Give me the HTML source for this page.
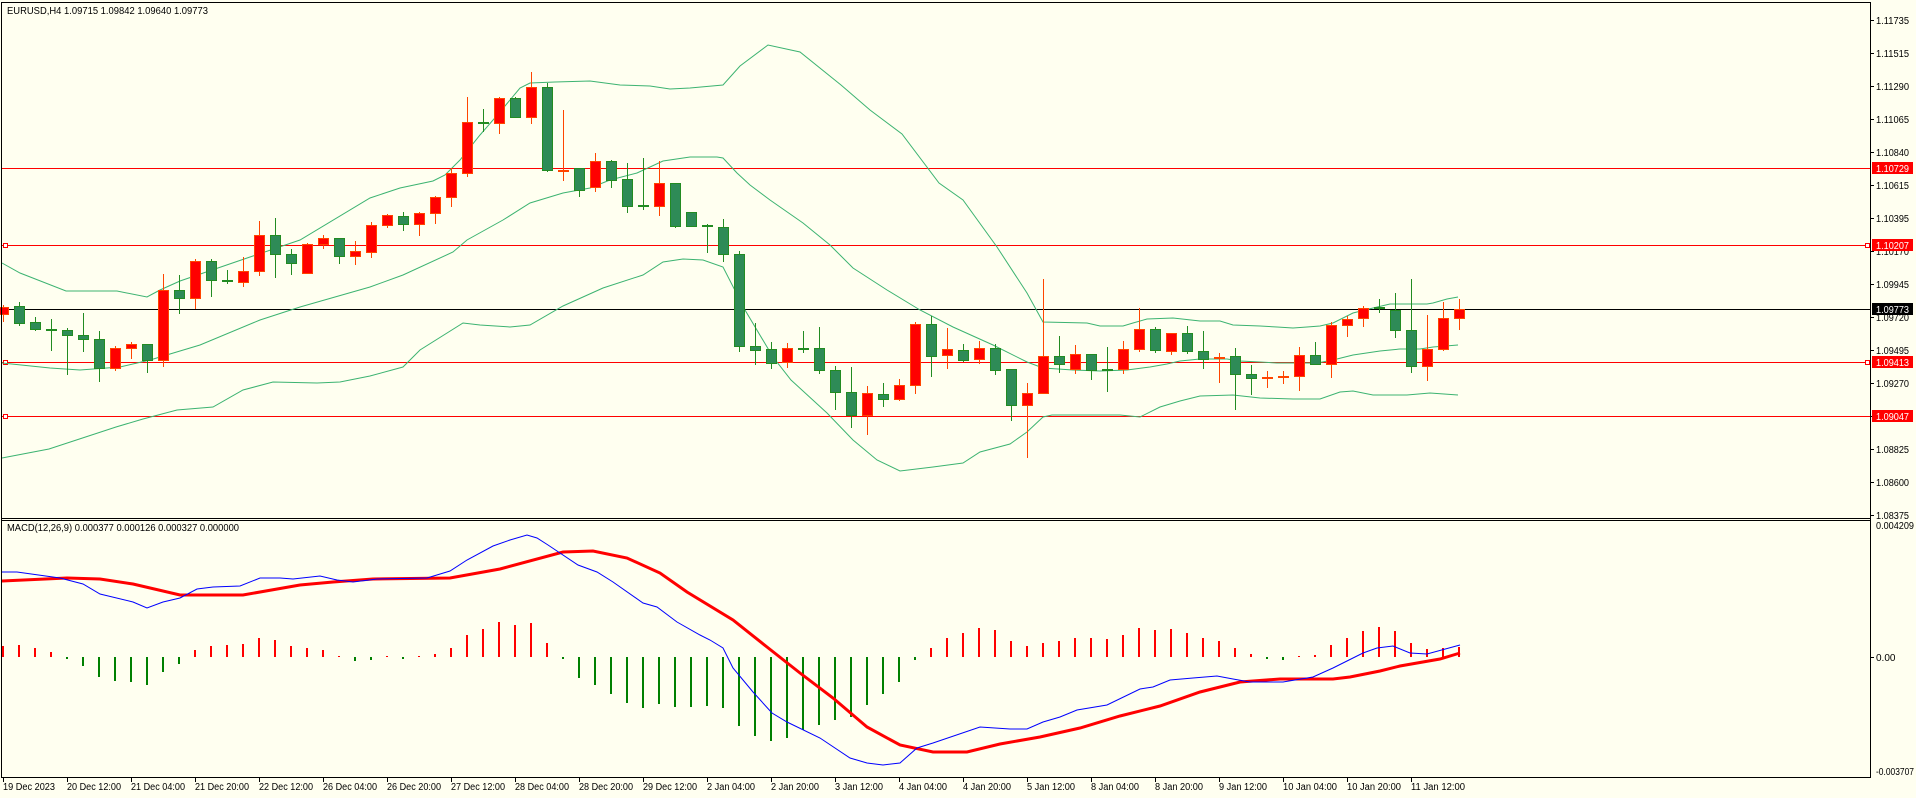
<!DOCTYPE html>
<html><head><meta charset="utf-8"><style>
html,body{margin:0;padding:0;background:#fffff0;width:1916px;height:798px;overflow:hidden}
svg{display:block}
text{font-family:"Liberation Sans",sans-serif;font-size:10px;fill:#000}
</style></head><body>
<svg id="s" width="1916" height="798" viewBox="0 0 1916 798" xmlns="http://www.w3.org/2000/svg">
<rect width="1916" height="798" fill="#fffff0"/>
<g id="lv" shape-rendering="crispEdges">
<line x1="2" y1="168.5" x2="1870" y2="168.5" stroke="#ff0000"/>
<line x1="2" y1="245.5" x2="1870" y2="245.5" stroke="#ff0000"/>
<line x1="2" y1="309.5" x2="1870" y2="309.5" stroke="#000"/>
<line x1="2" y1="362.5" x2="1870" y2="362.5" stroke="#ff0000"/>
<line x1="2" y1="416.5" x2="1870" y2="416.5" stroke="#ff0000"/>
<rect x="3.5" y="243.5" width="4" height="4" fill="#fff" stroke="#ff0000"/>
<rect x="3.5" y="360.5" width="4" height="4" fill="#fff" stroke="#ff0000"/>
<rect x="3.5" y="414.5" width="4" height="4" fill="#fff" stroke="#ff0000"/>
<rect x="1865.5" y="243.5" width="4" height="4" fill="#fff" stroke="#ff0000"/>
<rect x="1865.5" y="360.5" width="4" height="4" fill="#fff" stroke="#ff0000"/>
</g>
<g fill="none" stroke="#3cb371" stroke-width="1">
<polyline points="2,263 20,273 66,291 117,291 147,297 160,290 180,281 250,257 300,240 370,198 400,188 433,181 445,175 460,160 480,135 500,112 520,88 530,83 555,82 590,81 620,85 650,86 670,89 690,88 723,85 740,66 768,45 800,52 841,85 870,110 902,134 939,183 963,200 997,247 1027,293 1043,322 1087,323 1100,326 1123,326 1133,323 1147,319 1173,318 1200,321 1220,321 1233,325 1260,326 1277,327 1293,328 1307,327 1320,326 1333,323 1353,313 1373,308 1390,304 1427,304 1433,303 1447,299 1458,297"/>
<polyline points="2,363 50,368 80,370 120,367 150,360 200,345 260,320 300,307 370,287 403,275 453,252 467,240 503,220 530,203 563,193 590,188 610,180 637,173 663,161 690,157 717,157 723,158 737,173 750,185 770,200 803,223 830,245 853,268 887,290 920,310 953,327 993,345 1027,362 1043,368 1073,370 1100,371 1127,370 1150,367 1167,364 1180,361 1200,359 1227,359 1240,361 1260,362 1277,363 1317,363 1333,360 1353,355 1380,351 1400,349 1420,349 1433,347 1458,345"/>
<polyline points="2,458 49,449 116,427 143,419 177,410 213,407 243,390 273,382 317,383 340,382 370,376 403,367 420,350 463,323 480,325 510,327 530,325 563,306 603,288 643,275 663,262 683,259 703,260 723,267 745,310 773,357 791,380 827,413 853,440 877,460 900,471 933,467 963,463 980,452 1010,444 1027,432 1043,417 1052,415 1120,415 1140,417 1160,407 1180,401 1200,396 1233,395 1260,398 1293,399 1320,399 1340,392 1353,391 1373,395 1407,395 1430,393 1458,395"/>
</g>
<g id="cd" shape-rendering="crispEdges"></g>
<g id="hist" shape-rendering="crispEdges"></g>
<polyline fill="none" stroke="#ff0000" stroke-width="3" points="2,581 67,578 100,579 133,584 180,595 243,595 300,585 333,582 373,579 450,578 500,569 563,552 593,551 627,558 660,573 687,592 733,620 767,647 800,673 833,698 867,727 900,745 933,752 967,752 1000,744 1040,737 1080,728 1120,716 1160,706 1200,692 1240,682 1280,679 1333,679 1350,677 1380,671 1400,666 1440,659 1460,653"/>
<polyline fill="none" stroke="#0000ff" stroke-width="1" points="2,572 17,572 60,578 83,584 100,594 133,602 147,608 163,602 180,598 197,589 213,587 240,586 260,578 280,578 293,579 320,576 337,580 353,582 377,579 427,578 450,571 467,560 493,546 510,540 527,535 537,538 548,545 578,565 597,572 613,582 643,603 657,607 677,622 700,635 710,640 723,648 733,668 753,692 772,713 787,722 820,738 850,758 867,763 883,765 900,763 917,748 933,743 980,727 1010,729 1027,729 1043,722 1060,717 1077,710 1107,705 1140,689 1153,687 1170,680 1193,678 1217,676 1233,679 1250,682 1283,682 1313,677 1333,668 1363,653 1377,648 1393,646 1410,653 1427,654 1460,645"/>
<g shape-rendering="crispEdges" stroke="#000" fill="none">
<line x1="1.5" y1="2" x2="1.5" y2="777"/>
<line x1="1" y1="2.5" x2="1870" y2="2.5"/>
<line x1="1870.5" y1="2" x2="1870.5" y2="777"/>
<line x1="1" y1="518.5" x2="1871" y2="518.5"/>
<line x1="1" y1="520.5" x2="1871" y2="520.5"/>
<line x1="1" y1="777.5" x2="1871" y2="777.5"/>
</g>
<g id="ticks" shape-rendering="crispEdges" stroke="#000"></g>
<text x="7" y="14" textLength="201" lengthAdjust="spacingAndGlyphs">EURUSD,H4  1.09715 1.09842 1.09640 1.09773</text>
<text x="7" y="531" textLength="232" lengthAdjust="spacingAndGlyphs">MACD(12,26,9) 0.000377 0.000126 0.000327 0.000000</text>
<g id="pl"></g>
<g>
<rect x="1872" y="162" width="41" height="12" fill="#ff0000"/><text x="1876" y="172" style="fill:#fff" textLength="33" lengthAdjust="spacingAndGlyphs">1.10729</text>
<rect x="1872" y="239" width="41" height="12" fill="#ff0000"/><text x="1876" y="249" style="fill:#fff" textLength="33" lengthAdjust="spacingAndGlyphs">1.10207</text>
<rect x="1872" y="303" width="41" height="12" fill="#000"/><text x="1876" y="313" style="fill:#fff" textLength="33" lengthAdjust="spacingAndGlyphs">1.09773</text>
<rect x="1872" y="356" width="41" height="12" fill="#ff0000"/><text x="1876" y="366" style="fill:#fff" textLength="33" lengthAdjust="spacingAndGlyphs">1.09413</text>
<rect x="1872" y="410" width="41" height="12" fill="#ff0000"/><text x="1876" y="420" style="fill:#fff" textLength="33" lengthAdjust="spacingAndGlyphs">1.09047</text>
</g>
<text x="1876" y="529" textLength="38" lengthAdjust="spacingAndGlyphs">0.004209</text>
<text x="1876" y="661">0.00</text>
<text x="1876" y="775" textLength="38" lengthAdjust="spacingAndGlyphs">-0.003707</text>
<g id="tl"></g>
</svg>
<script>
var NS="http://www.w3.org/2000/svg";
function el(p,t,a,txt){var e=document.createElementNS(NS,t);for(var k in a)e.setAttribute(k,a[k]);if(txt)e.textContent=txt;document.getElementById(p).appendChild(e);return e;}
var C=[["r",305,306.7,314,322],["g",302,306,322.7,325.7],["g",317,322.3,329.3,330.7],["g",319,329,330.7,350.7],["g",328,330.3,335.3,374.7],["g",313.3,335.3,339.3,351.7],["g",331,339.3,368.3,381.7],["r",346,348.3,368.3,370.7],["r",342.3,344.3,348.3,358.7],["g",344.3,344.3,360.3,372.7],["r",274,290.3,360.3,366.7],["g",275,290.3,298.3,313.7],["r",259.3,261.3,298.3,309.3],["g",259.3,261.3,280.3,296.7],["g",270,280.3,282.3,284.3],["r",256.7,271.3,282.3,286.7],["r",221.3,235.3,271.3,275.7],["g",218,235.3,254.3,277.7],["g",249,254.3,263.3,274.7],["r",243,244.3,273.3,273.3],["r",235,238.3,244.3,248.7],["g",238.3,238.3,256.3,263.7],["r",241,251.3,256.3,264.7],["r",222,225.3,252.3,257.7],
["r",214.3,215.3,225.3,227.7],["g",212,216.3,224.3,230.7],["r",212,213.3,224.3,235.7],["r",196,197.3,213.3,223.7],["r",168.3,173.3,197.3,206.7],["r",97,122.3,173.3,176.7],["g",109,122,123.3,131.7],["r",97,98.3,123.3,133.7],["g",97,98.3,116.7,117.7],["r",72,87.3,116.7,123.7],["g",82.7,87,170.3,171.7],["r",110,170,170.5,180.7],["g",168.3,168.3,189.7,196.7],["r",153,161.3,187.3,191.7],["g",160,161.3,180.3,187.7],["g",163,179,205.7,212.7],["g",158,205,206.7,210],["r",160.7,183.3,205.7,215.7],["g",183.3,183.3,225.7,227.7],["g",211.7,212.3,225.7,226.7],["g",224,225,227.3,252.7],["g",219,227,254.3,261.7],["g",251,254.3,346.3,351.7],
["g",323,346,349.7,364.7],["g",342,349,363.3,368.7],["r",343,348,362,367.7],["g",331,347.7,348.7,352.7],["g",326.7,348,370.3,373.7],["g",366,370,392.3,410],["g",366.7,392.3,414.7,427.7],["r",386,393.3,414.7,434.7],["g",383,394,398.7,406.7],["r",379,385.3,398.7,400.7],["r",322,324.3,385.3,393.7],["g",316,324.3,355.7,376.7],["r",328,349.3,354.7,368.7],["g",344,350.3,359.7,362.3],["r",341,348.3,359.3,364],["g",344.3,348.3,369.7,374.7],["g",369.3,369.3,405.3,420.7],["r",383,393.3,405.3,458.3],["r",279,356.3,393.3,393.3],["g",336,356.3,364.3,372.7],["r",345,353.7,368.7,373.7],["g",353.7,353.7,370,379.7],["g",347,369.3,370,391.7],
["r",341,349.3,369.3,373.7],["r",308.3,329.3,349.3,351.7],["g",327,329.3,350.3,352.7],["r",333.3,333.3,351.3,354.7],["g",326,333.3,351.3,353.7],["g",331,351.3,359,368.7],["r",353.3,356.7,359.3,382.7],["g",348.3,356.3,374.3,409.7],["g",365.3,374.3,378.3,394.7],["r",371.3,377.3,378.3,387.7],["r",371.3,376,376.7,383.7],["r",347.3,354.7,376.3,390.7],["g",342,355.3,364.3,364.3],["r",322,325.3,364.3,377.7],["r",316.3,318.7,325.3,336.7],["r",306.3,307.7,318.3,326.7],["g",299.3,307.3,309.3,312.7],["g",293,309.7,330.3,337.7],["g",279,330.3,366.3,372.7],["r",315,349.3,366.3,380.7],["r",302,318.3,349.3,350.7],["r",299,309.3,318.3,329.7]];
for(var i=0;i<C.length;i++){var c=C[i],x=3+16*i;var wc=c[0]=="r"?"#ff4500":"#228b22",fc=c[0]=="r"?"#ff0000":"#2e8b57";
var wt=Math.round(c[1]),bt=Math.round(c[2]),bb=Math.round(c[3]),wb=Math.round(c[4]);
el("cd","rect",{x:x,y:wt,width:1,height:Math.max(1,wb-wt),fill:wc});
if(bb-bt<3){el("cd","rect",{x:x-5,y:bt,width:11,height:2,fill:wc});}
else{el("cd","rect",{x:x-5,y:bt,width:11,height:bb-bt+1,fill:wc});el("cd","rect",{x:x-4,y:bt+1,width:9,height:bb-bt-1,fill:fc});}}
var H=[646,645,648,652,659,666,677,681,682,685,672,664,650,646,645,644,638,640,646,648,650,656,661,660,656,658,656,654,648,635,629,622,625,623,643,659,678,685,694,703,708,704,707,707,706,708,726,736,741,738,730,725,720,717,705,694,682,660,648,638,633,628,630,641,646,643,641,638,638,639,635,628,630,629,633,638,641,648,654,659,660,656,655,645,638,631,627,631,643,649,648,647];
for(var i=0;i<H.length;i++){var x=2+16*i,h=H[i];if(h<657)el("hist","rect",{x:x,y:h,width:2,height:657-h,fill:"#ff0000"});else el("hist","rect",{x:x,y:657,width:2,height:Math.max(2,h-657),fill:"#008000"});}
var P=["1.11735","1.11515","1.11290","1.11065","1.10840","1.10615","1.10395","1.10170","1.09945","1.09720","1.09495","1.09270","1.09045","1.08825","1.08600","1.08375"];
for(var i=0;i<P.length;i++){var y=20+i*33;el("ticks","line",{x1:1871,x2:1874,y1:y+.5,y2:y+.5});el("pl","text",{x:1876,y:y+4,textLength:33,lengthAdjust:"spacingAndGlyphs"},P[i]);}
el("ticks","line",{x1:1871,x2:1874,y1:657.5,y2:657.5});
var T=["19 Dec 2023","20 Dec 12:00","21 Dec 04:00","21 Dec 20:00","22 Dec 12:00","26 Dec 04:00","26 Dec 20:00","27 Dec 12:00","28 Dec 04:00","28 Dec 20:00","29 Dec 12:00","2 Jan 04:00","2 Jan 20:00","3 Jan 12:00","4 Jan 04:00","4 Jan 20:00","5 Jan 12:00","8 Jan 04:00","8 Jan 20:00","9 Jan 12:00","10 Jan 04:00","10 Jan 20:00","11 Jan 12:00"];
for(var i=0;i<T.length;i++){var x=3+64*i;el("ticks","line",{x1:x+.5,x2:x+.5,y1:778,y2:782});var len=T[i].length<=11?(i==0?52:48):54;el("tl","text",{x:x,y:790,textLength:len,lengthAdjust:"spacingAndGlyphs"},T[i]);}
</script>
</body></html>
